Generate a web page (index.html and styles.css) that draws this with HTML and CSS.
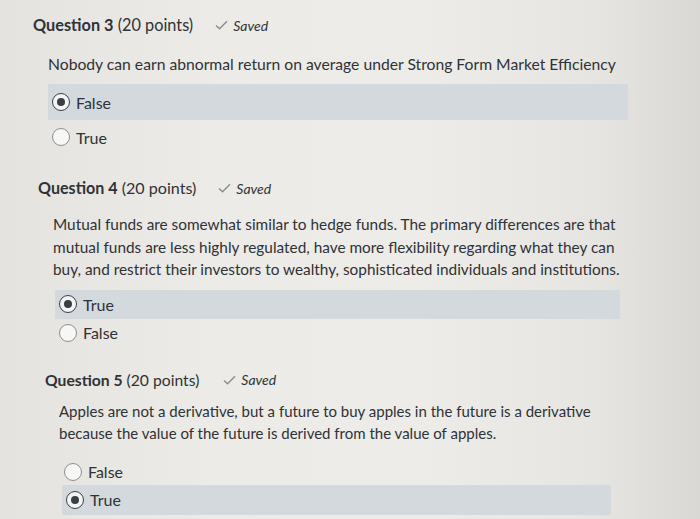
FILE: index.html
```html
<!DOCTYPE html>
<html>
<head>
<meta charset="utf-8">
<link rel="stylesheet" href="styles.css">
</head>
<body>
<main class="quiz">
  <section class="question q3">
    <header class="q-head">
      <h2 class="q-title"><span class="q-num">Question 3</span> (20 points)</h2>
      <span class="saved"><svg class="check" viewBox="0 0 13 10" width="13" height="10"><path d="M1 5.5 L4.5 8.8 L12 1.2" fill="none" stroke="#8a8d90" stroke-width="1.4"/></svg><em>Saved</em></span>
    </header>
    <p class="q-text">Nobody can earn abnormal return on average under Strong Form Market Efficiency</p>
    <ul class="options">
      <li class="option selected"><span class="radio on"></span>False</li>
      <li class="option"><span class="radio"></span>True</li>
    </ul>
  </section>

  <section class="question q4">
    <header class="q-head">
      <h2 class="q-title"><span class="q-num">Question 4</span> (20 points)</h2>
      <span class="saved"><svg class="check" viewBox="0 0 13 10" width="13" height="10"><path d="M1 5.5 L4.5 8.8 L12 1.2" fill="none" stroke="#8a8d90" stroke-width="1.4"/></svg><em>Saved</em></span>
    </header>
    <p class="q-text">Mutual funds are somewhat similar to hedge funds. The primary differences are that<br>mutual funds are less highly regulated, have more flexibility regarding what they can<br>buy, and restrict their investors to wealthy, sophisticated individuals and institutions.</p>
    <ul class="options">
      <li class="option selected"><span class="radio on"></span>True</li>
      <li class="option"><span class="radio"></span>False</li>
    </ul>
  </section>

  <section class="question q5">
    <header class="q-head">
      <h2 class="q-title"><span class="q-num">Question 5</span> (20 points)</h2>
      <span class="saved"><svg class="check" viewBox="0 0 13 10" width="13" height="10"><path d="M1 5.5 L4.5 8.8 L12 1.2" fill="none" stroke="#8a8d90" stroke-width="1.4"/></svg><em>Saved</em></span>
    </header>
    <p class="q-text">Apples are not a derivative, but a future to buy apples in the future is a derivative<br>because the value of the future is derived from the value of apples.</p>
    <ul class="options">
      <li class="option"><span class="radio"></span>False</li>
      <li class="option selected"><span class="radio on"></span>True</li>
    </ul>
  </section>
</main>
</body>
</html>
```

FILE: styles.css
```css
html, body {
  margin: 0;
  padding: 0;
  height: 100%;
}
body {
  font-family: Lato, "Open Sans", sans-serif;
  color: #2f3236;
  background: linear-gradient(90deg, #e4e3df 0%, #ecebe7 30%, #edece8 60%, #e6e5e1 85%, #d9d8d4 100%);
  overflow: hidden;
}
.quiz {
  display: flex;
  flex-direction: column;
  padding-top: 14px;
}
.question {
  display: flex;
  flex-direction: column;
}
.q-head {
  display: flex;
  align-items: center;
  height: 22px;
  gap: 22px;
}
.q-title {
  margin: 0;
  font-size: 16.3px;
  font-weight: 400;
  line-height: 22px;
  white-space: nowrap;
}
.q-num {
  font-weight: 700;
}
.saved {
  display: flex;
  align-items: center;
  gap: 5px;
  font-size: 14px;
}
.saved em {
  font-style: italic;
}
.q-text {
  margin: 0;
  font-size: 15.7px;
  line-height: 22px;
  white-space: nowrap;
}
.options {
  list-style: none;
  margin: 0;
  padding: 0;
  display: flex;
  flex-direction: column;
}
.option {
  display: flex;
  align-items: center;
  gap: 6px;
  padding-left: 4px;
  font-size: 16px;
}
.option.selected {
  background: #d4d9de;
}
.radio {
  box-sizing: border-box;
  width: 18px;
  height: 18px;
  border-radius: 50%;
  border: 1.2px solid #8c8e91;
  background: #f7f7f5;
  flex: none;
  display: flex;
  align-items: center;
  justify-content: center;
}
.radio.on {
  border: 1.8px solid #3b3e42;
  background: #f3f4f5;
}
.radio.on::after {
  content: "";
  width: 8px;
  height: 8px;
  border-radius: 50%;
  background: #3b3e42;
}

/* Question 3 */
.q3 { margin-left: 33px; }
.q3 .q-text { margin: 17px 0 0 15px; }
.q3 .options { margin: 9px 0 0 15px; width: 580px; }
.q3 .option { height: 36px; }
.q3 .option + .option { height: 34px; }

/* Question 4 */
.q4 { margin-left: 38px; margin-top: 23px; }
.q4 .q-title { font-size: 16.1px; }
.q4 .q-text { margin: 14px 0 0 15px; line-height: 22.5px; font-size: 15.37px; }
.q4 .options { margin: 9px 0 0 17px; width: 565px; }
.q4 .option { height: 28px; }
.q4 .option.selected { height: 29px; }

/* Question 5 */
.q5 { margin-left: 45px; margin-top: 22px; }
.q5 .q-title { font-size: 15.7px; }
.q5 .q-head { gap: 24px; }
.q5 .q-text { margin: 9px 0 0 14px; font-size: 15px; }
.q5 .options { margin: 15px 0 0 17px; width: 549px; }
.q5 .option { height: 26px; padding-left: 2px; }
.q5 .option.selected { height: 30px; padding-left: 4px; }
```
